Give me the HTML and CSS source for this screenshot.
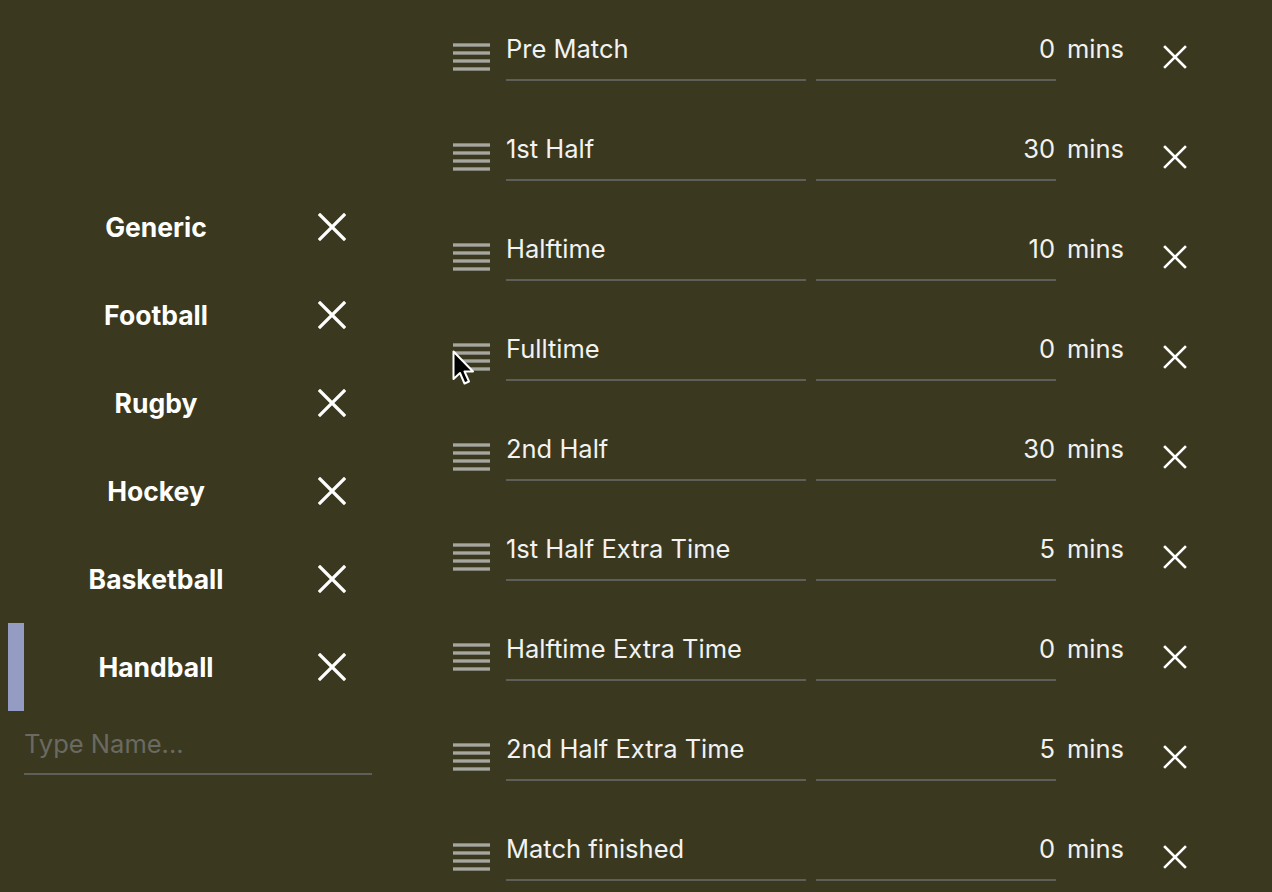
FILE: index.html
```html
<!DOCTYPE html>
<html>
<head>
<meta charset="utf-8">
<link rel="stylesheet" href="styles.css">
</head>
<body>
<div class="app">
  <div class="sports">
    <div class="sport"><span class="sport-name">Generic</span><button class="del big"><svg viewBox="0 0 28 28"><path d="M2 2L26 26M26 2L2 26"/></svg></button></div>
    <div class="sport"><span class="sport-name">Football</span><button class="del big"><svg viewBox="0 0 28 28"><path d="M2 2L26 26M26 2L2 26"/></svg></button></div>
    <div class="sport"><span class="sport-name">Rugby</span><button class="del big"><svg viewBox="0 0 28 28"><path d="M2 2L26 26M26 2L2 26"/></svg></button></div>
    <div class="sport"><span class="sport-name">Hockey</span><button class="del big"><svg viewBox="0 0 28 28"><path d="M2 2L26 26M26 2L2 26"/></svg></button></div>
    <div class="sport"><span class="sport-name">Basketball</span><button class="del big"><svg viewBox="0 0 28 28"><path d="M2 2L26 26M26 2L2 26"/></svg></button></div>
    <div class="sport selected"><span class="sport-name">Handball</span><button class="del big"><svg viewBox="0 0 28 28"><path d="M2 2L26 26M26 2L2 26"/></svg></button></div>
    <input class="new-sport" type="text" placeholder="Type Name...">
  </div>

  <div class="phases">
    <div class="phase"><div class="handle"><i></i><i></i><i></i><i></i></div><div class="field name">Pre Match</div><div class="field mins">0</div><span class="unit">mins</span><button class="del small"><svg viewBox="0 0 24 24"><path d="M2 2L22 22M22 2L2 22"/></svg></button></div>
    <div class="phase"><div class="handle"><i></i><i></i><i></i><i></i></div><div class="field name">1st Half</div><div class="field mins">30</div><span class="unit">mins</span><button class="del small"><svg viewBox="0 0 24 24"><path d="M2 2L22 22M22 2L2 22"/></svg></button></div>
    <div class="phase"><div class="handle"><i></i><i></i><i></i><i></i></div><div class="field name">Halftime</div><div class="field mins">10</div><span class="unit">mins</span><button class="del small"><svg viewBox="0 0 24 24"><path d="M2 2L22 22M22 2L2 22"/></svg></button></div>
    <div class="phase"><div class="handle"><i></i><i></i><i></i><i></i></div><div class="field name">Fulltime</div><div class="field mins">0</div><span class="unit">mins</span><button class="del small"><svg viewBox="0 0 24 24"><path d="M2 2L22 22M22 2L2 22"/></svg></button></div>
    <div class="phase"><div class="handle"><i></i><i></i><i></i><i></i></div><div class="field name">2nd Half</div><div class="field mins">30</div><span class="unit">mins</span><button class="del small"><svg viewBox="0 0 24 24"><path d="M2 2L22 22M22 2L2 22"/></svg></button></div>
    <div class="phase"><div class="handle"><i></i><i></i><i></i><i></i></div><div class="field name">1st Half Extra Time</div><div class="field mins">5</div><span class="unit">mins</span><button class="del small"><svg viewBox="0 0 24 24"><path d="M2 2L22 22M22 2L2 22"/></svg></button></div>
    <div class="phase"><div class="handle"><i></i><i></i><i></i><i></i></div><div class="field name">Halftime Extra Time</div><div class="field mins">0</div><span class="unit">mins</span><button class="del small"><svg viewBox="0 0 24 24"><path d="M2 2L22 22M22 2L2 22"/></svg></button></div>
    <div class="phase"><div class="handle"><i></i><i></i><i></i><i></i></div><div class="field name">2nd Half Extra Time</div><div class="field mins">5</div><span class="unit">mins</span><button class="del small"><svg viewBox="0 0 24 24"><path d="M2 2L22 22M22 2L2 22"/></svg></button></div>
    <div class="phase"><div class="handle"><i></i><i></i><i></i><i></i></div><div class="field name">Match finished</div><div class="field mins">0</div><span class="unit">mins</span><button class="del small"><svg viewBox="0 0 24 24"><path d="M2 2L22 22M22 2L2 22"/></svg></button></div>
  </div>

  <svg class="cursor" viewBox="0 0 22 36" width="22" height="36"><path d="M1.5 1.5L1.5 29L8 23L12.5 33.5L17 31.5L12.5 21.5L21 21.5Z" fill="#000" stroke="#fff" stroke-width="2" stroke-linejoin="round"/></svg>
</div>
</body>
</html>
```
FILE: styles.css
```css
html, body {
  margin: 0;
  padding: 0;
  height: 100%;
  background: #3a391f;
  overflow: hidden;
}

.app {
  position: relative;
  display: flex;
  align-items: flex-start;
  height: 892px;
  font-family: Inter, "Noto Sans", sans-serif;
  color: #f2f2f2;
}

/* left: sports list */
.sports {
  width: 368px;
  padding: 183px 0 0 8px;
  display: flex;
  flex-direction: column;
}

.sport {
  display: flex;
  align-items: center;
  height: 88px;
  border-left: 16px solid transparent;
}

.sport.selected {
  border-left-color: #959cc4;
}

.sport-name {
  width: 264px;
  text-align: center;
  font-weight: 700;
  font-size: 26.5px;
  color: #ffffff;
}

.del {
  background: none;
  border: 0;
  padding: 0;
  display: flex;
  align-items: center;
  justify-content: center;
  cursor: pointer;
}

.del svg path {
  stroke: #ffffff;
  fill: none;
  stroke-linecap: square;
}

.del.big {
  width: 88px;
  height: 88px;
}

.del.big svg {
  width: 28px;
  height: 28px;
}

.del.big svg path {
  stroke-width: 3.2;
}

.new-sport {
  margin: 17px 0 0 16px;
  width: 348px;
  height: 30px;
  padding: 0 0 15px 0;
  box-sizing: content-box;
  border: 0;
  border-bottom: 2px solid #5f5f5a;
  background: transparent;
  outline: none;
  font-family: Inter, "Noto Sans", sans-serif;
  font-size: 25.5px;
  color: #f2f2f2;
}

.new-sport::placeholder {
  color: #6a6a62;
}

/* right: phases */
.phases {
  margin-left: 77px;
  display: flex;
  flex-direction: column;
}

.phase {
  display: flex;
  align-items: flex-start;
  height: 100px;
}

.handle {
  width: 37px;
  margin-top: 43px;
  display: flex;
  flex-direction: column;
  gap: 4px;
}

.handle i {
  display: block;
  height: 4px;
  background: linear-gradient(#707064, #b8b8b2 50%, #707064);
}

.field {
  margin-top: 34px;
  line-height: 30px;
  height: 30px;
  padding-bottom: 15px;
  border-bottom: 2px solid #5f5f5a;
  font-size: 25.5px;
  white-space: nowrap;
}

.field.name {
  width: 300px;
  margin-left: 16px;
}

.field.mins {
  width: 239px;
  margin-left: 10px;
  padding-right: 1px;
  text-align: right;
}

.unit {
  margin-top: 34px;
  margin-left: 11px;
  line-height: 30px;
  font-size: 25.5px;
}

.del.small {
  width: 24px;
  height: 24px;
  margin-top: 45px;
  margin-left: 39px;
}

.del.small svg {
  width: 24px;
  height: 24px;
}

.del.small svg path {
  stroke-width: 2.6;
}

.cursor {
  position: absolute;
  left: 452px;
  top: 350px;
}
```
